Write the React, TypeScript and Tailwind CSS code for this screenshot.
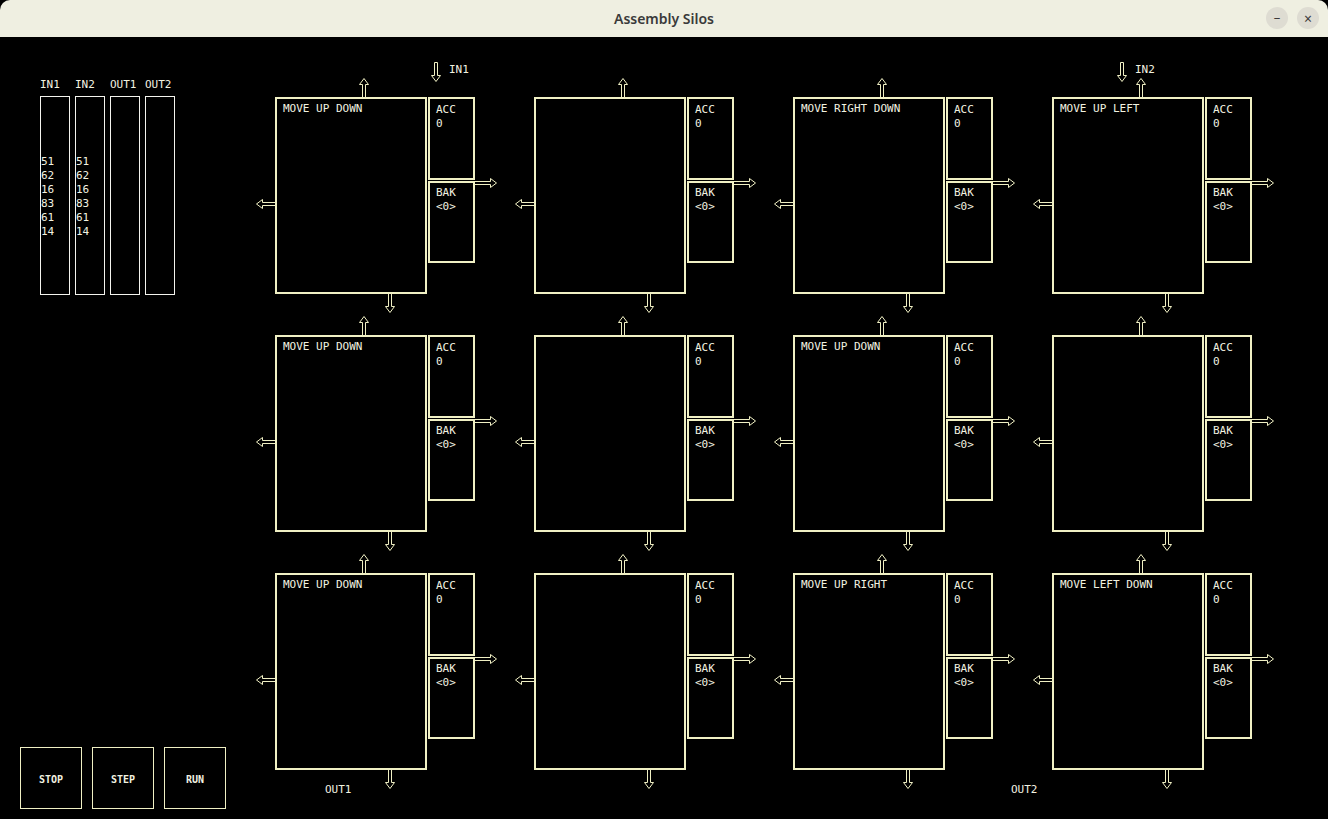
import React from "react";

// Assembly Silos – puzzle board

const LINE = "#f0f0c4";

type SiloData = { code: string };

const SILOS: SiloData[][] = [
  [{ code: "MOVE UP DOWN" }, { code: "" }, { code: "MOVE RIGHT DOWN" }, { code: "MOVE UP LEFT" }],
  [{ code: "MOVE UP DOWN" }, { code: "" }, { code: "MOVE UP DOWN" }, { code: "" }],
  [{ code: "MOVE UP DOWN" }, { code: "" }, { code: "MOVE UP RIGHT" }, { code: "MOVE LEFT DOWN" }],
];

const INPUT = ["51", "62", "16", "83", "61", "14"];

function ArrowUp() {
  return (
    <svg width="10" height="19" viewBox="0 0 10 19" className="block">
      <path d="M3.5 19 V6.5 H0.5 L5 0.5 L9.5 6.5 H6.5 V19" fill="none" stroke={LINE} strokeWidth="1" />
    </svg>
  );
}

function ArrowDown({ closed = false, height = 19 }: { closed?: boolean; height?: number }) {
  const h = height;
  const d = closed
    ? `M3.5 0.5 H6.5 V${h - 6.5} H9.5 L5 ${h - 0.5} L0.5 ${h - 6.5} H3.5 Z`
    : `M3.5 0 V${h - 6.5} H0.5 L5 ${h - 0.5} L9.5 ${h - 6.5} H6.5 V0`;
  return (
    <svg width="10" height={h} viewBox={`0 0 10 ${h}`} className="block">
      <path d={d} fill="none" stroke={LINE} strokeWidth="1" />
    </svg>
  );
}

function ArrowLeft() {
  return (
    <svg width="19" height="10" viewBox="0 0 19 10" className="block">
      <path d="M19 3.5 H6.5 V0.5 L0.5 5 L6.5 9.5 V6.5 H19" fill="none" stroke={LINE} strokeWidth="1" />
    </svg>
  );
}

function ArrowRight() {
  return (
    <svg width="22" height="10" viewBox="0 0 22 10" className="block">
      <path d="M0 3.5 H15.5 V0.5 L21.5 5 L15.5 9.5 V6.5 H0" fill="none" stroke={LINE} strokeWidth="1" />
    </svg>
  );
}

function Silo({ code }: SiloData) {
  return (
    <div className="grid grid-cols-[19px_152px_1px_47px_22px] grid-rows-[19px_197px_19px]">
      <div className="col-start-2 row-start-1 flex items-end pl-[84px]">
        <ArrowUp />
      </div>
      <div className="col-start-1 row-start-2 pt-[102px]">
        <ArrowLeft />
      </div>
      <div className="col-start-2 row-start-2 border-2 border-[#f0f0c4] px-[6px] pt-[3px] leading-[14px] whitespace-pre">
        {code}
      </div>
      <div className="col-start-4 row-start-2 flex flex-col gap-px">
        <div className="h-[83px] border-2 border-[#f0f0c4] pl-[6px] pt-[4px] leading-[14px]">
          <div>ACC</div>
          <div>0</div>
        </div>
        <div className="h-[82px] border-2 border-[#f0f0c4] pl-[6px] pt-[3px] leading-[14px]">
          <div>BAK</div>
          <div>&lt;0&gt;</div>
        </div>
      </div>
      <div className="col-start-5 row-start-2 pt-[81px]">
        <ArrowRight />
      </div>
      <div className="col-start-2 row-start-3 pl-[110px]">
        <ArrowDown />
      </div>
    </div>
  );
}

function StreamColumn({ label, values }: { label: string; values: string[] }) {
  return (
    <div className="flex w-[30px] flex-col">
      <div className="h-[14px] leading-[14px]">{label}</div>
      <div className="mt-[4px] h-[199px] border border-[#f4f4ee] pt-[58px] leading-[14px]">
        {values.map((v, i) => (
          <div key={i}>{v}</div>
        ))}
      </div>
    </div>
  );
}

export default function App() {
  return (
    <div className="flex h-[819px] w-[1328px] flex-col overflow-hidden bg-black">
      {/* Window title bar */}
      <div className="relative flex h-[37px] shrink-0 items-center justify-center rounded-t-[10px] bg-[#efefe1] font-['Noto_Sans',sans-serif] text-[14px] font-semibold text-[#3a3a3a]">
        <span>Assembly Silos</span>
        <div className="absolute right-[9px] top-[7px] flex gap-[9px]">
          <div className="flex h-[22px] w-[22px] items-center justify-center rounded-full bg-[#dedcd2] text-[13px] font-normal">–</div>
          <div className="flex h-[22px] w-[22px] items-center justify-center rounded-full bg-[#dedcd2] text-[14px] font-normal">×</div>
        </div>
      </div>

      {/* Board */}
      <div className="flex flex-1 font-['DejaVu_Sans_Mono','Liberation_Mono',monospace] text-[11px] text-[#f2f2e0]">
        {/* Left panel: streams + controls */}
        <div className="flex w-[256px] shrink-0 flex-col justify-between">
          <div className="flex gap-[5px] pl-[40px] pt-[41px]">
            <StreamColumn label="IN1" values={INPUT} />
            <StreamColumn label="IN2" values={INPUT} />
            <StreamColumn label="OUT1" values={[]} />
            <StreamColumn label="OUT2" values={[]} />
          </div>
          <div className="flex gap-[10px] pb-[10px] pl-[20px] text-[10px] font-bold">
            {["STOP", "STEP", "RUN"].map((b) => (
              <button
                key={b}
                className="flex h-[62px] w-[62px] items-center justify-center border border-[#f0f0c4] bg-black pt-[2px]"
              >
                {b}
              </button>
            ))}
          </div>
        </div>

        {/* Silo grid */}
        <div className="relative flex-1 pt-[41px]">
          <div className="grid grid-cols-[241px_241px_241px_241px] gap-x-[18px] gap-y-[3px]">
            {SILOS.flat().map((s, i) => (
              <Silo key={i} code={s.code} />
            ))}
          </div>

          {/* Port markers */}
          <div className="absolute left-[175px] top-[25px]">
            <ArrowDown closed height={20} />
          </div>
          <div className="absolute left-[193px] top-[26px] leading-[14px]">IN1</div>
          <div className="absolute left-[861px] top-[25px]">
            <ArrowDown closed height={20} />
          </div>
          <div className="absolute left-[879px] top-[26px] leading-[14px]">IN2</div>
          <div className="absolute left-[69px] top-[746px] leading-[14px]">OUT1</div>
          <div className="absolute left-[755px] top-[746px] leading-[14px]">OUT2</div>
        </div>
      </div>
    </div>
  );
}
